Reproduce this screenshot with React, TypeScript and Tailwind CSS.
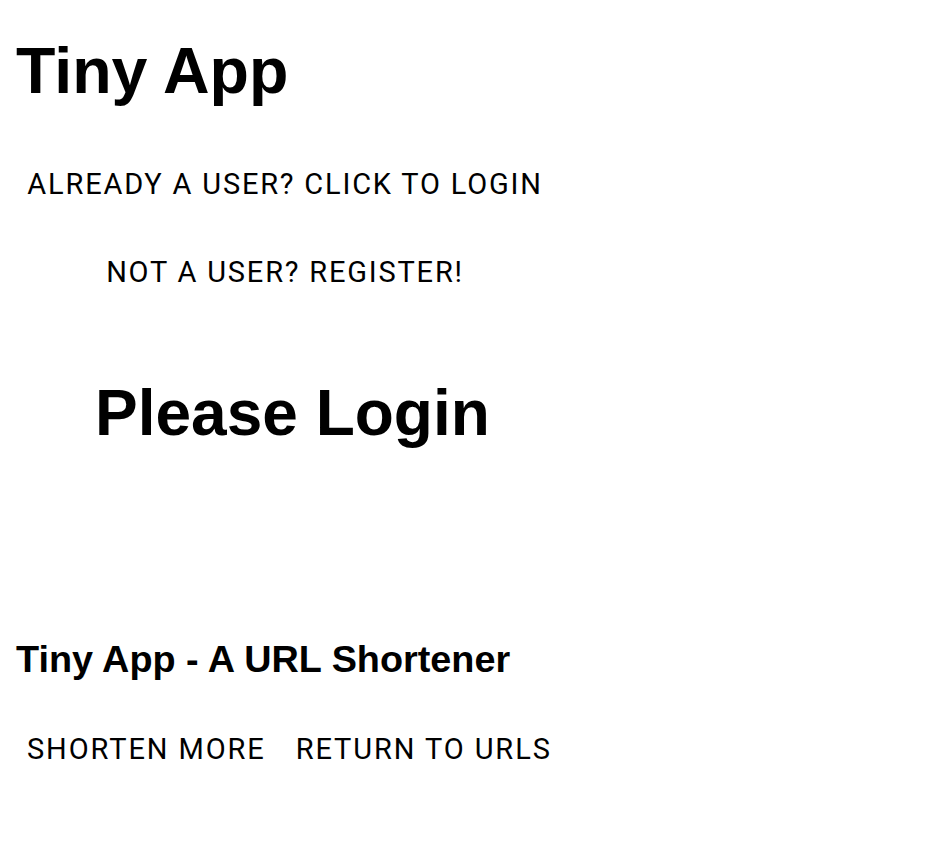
export default function App() {
  return (
    <div className="min-h-[850px] w-full bg-white text-black">
      <header className="pl-4 pt-[39px]">
        <h1 className="font-['Liberation_Sans',Arial,sans-serif] text-[64.5px] font-bold leading-none">
          Tiny App
        </h1>
      </header>

      <nav className="mt-[66px] flex w-[554px] flex-col items-center gap-[59px] pl-4 font-['Roboto','Noto_Sans',sans-serif] text-[29px] leading-none tracking-[1.8px] uppercase">
        <a href="#">Already a user? Click to login</a>
        <a href="#">Not a user? Register!</a>
      </nav>

      <main className="mt-[94px] pl-[95px]">
        <h1 className="font-['Liberation_Sans',Arial,sans-serif] text-[64px] font-bold leading-none">
          Please Login
        </h1>
      </main>

      <footer className="mt-[196px] pl-4">
        <h2 className="font-['Liberation_Sans',Arial,sans-serif] text-[37.8px] font-bold leading-none">
          Tiny App - A URL Shortener
        </h2>
        <div className="mt-[57px] flex gap-[30px] pl-[11px] font-['Roboto','Noto_Sans',sans-serif] text-[29px] leading-none tracking-[1.9px] uppercase">
          <a href="#">Shorten more</a>
          <a href="#">Return to URLs</a>
        </div>
      </footer>
    </div>
  );
}
